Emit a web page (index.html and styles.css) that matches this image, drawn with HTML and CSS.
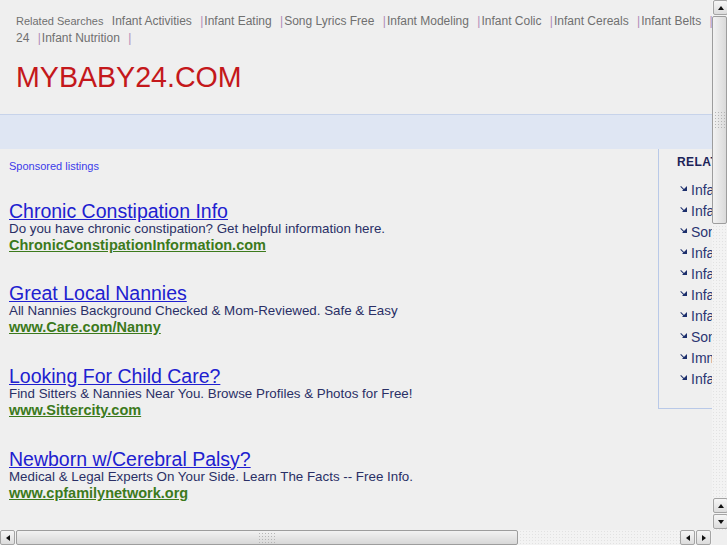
FILE: index.html
```html
<!DOCTYPE html>
<html lang="en">
<head>
  <meta charset="UTF-8" />
  <title>mybaby24.com</title>
  <link rel="stylesheet" href="styles.css">
</head>
<body>
  <div class="window">
    <div class="viewport">
      <div class="page">
        <div class="top">
          <div class="related">
            <span class="related-label">Related Searches</span>
            <a href="#">Infant Activities</a> <span class="sep">|</span><a href="#">Infant Eating</a> <span class="sep">|</span><a href="#">Song Lyrics Free</a> <span class="sep">|</span><a href="#">Infant Modeling</a> <span class="sep">|</span><a href="#">Infant Colic</a> <span class="sep">|</span><a href="#">Infant Cereals</a> <span class="sep">|</span><a href="#">Infant Belts</a> <span class="sep">|</span><a href="#">Stroller 24</a> <span class="sep">|</span><a href="#">Infant Nutrition</a> <span class="sep">|</span>
          </div>
          <h1 class="domain">MYBABY24.COM</h1>
        </div>
        <div class="band"></div>
        <div class="content">
          <div class="listings">
            <div class="sponsored">Sponsored listings</div>

            <div class="ad">
              <a class="ad-title" href="#">Chronic Constipation Info</a>
              <div class="ad-text">Do you have chronic constipation? Get helpful information here.</div>
              <a class="ad-url" href="#">ChronicConstipationInformation.com</a>
            </div>

            <div class="ad">
              <a class="ad-title" href="#">Great Local Nannies</a>
              <div class="ad-text">All Nannies Background Checked &amp; Mom-Reviewed. Safe &amp; Easy</div>
              <a class="ad-url" href="#">www.Care.com/Nanny</a>
            </div>

            <div class="ad">
              <a class="ad-title" href="#">Looking For Child Care?</a>
              <div class="ad-text">Find Sitters &amp; Nannies Near You. Browse Profiles &amp; Photos for Free!</div>
              <a class="ad-url" href="#">www.Sittercity.com</a>
            </div>

            <div class="ad">
              <a class="ad-title" href="#">Newborn w/Cerebral Palsy?</a>
              <div class="ad-text">Medical &amp; Legal Experts On Your Side. Learn The Facts -- Free Info.</div>
              <a class="ad-url" href="#">www.cpfamilynetwork.org</a>
            </div>
          </div>

          <div class="sidebar">
            <div class="side-head">RELATED SEARCHES</div>
            <ul class="side-list">
              <li><a href="#">Infant Activities</a></li>
              <li><a href="#">Infant Eating</a></li>
              <li><a href="#">Song Lyrics Free</a></li>
              <li><a href="#">Infant Modeling</a></li>
              <li><a href="#">Infant Colic</a></li>
              <li><a href="#">Infant Cereals</a></li>
              <li><a href="#">Infant Belts</a></li>
              <li><a href="#">Song Lyrics</a></li>
              <li><a href="#">Immunization</a></li>
              <li><a href="#">Infant Nutrition</a></li>
            </ul>
          </div>
        </div>
      </div>
    </div>

    <div class="vscroll">
      <div class="sb-btn"><span class="tri up"></span></div>
      <div class="sb-thumb v"><span class="grip"></span></div>
      <div class="sb-track"></div>
      <div class="sb-btn"><span class="tri up"></span></div>
      <div class="sb-btn"><span class="tri down"></span></div>
    </div>

    <div class="hscroll">
      <div class="sb-btn h"><span class="tri left"></span></div>
      <div class="sb-thumb h"><span class="grip"></span></div>
      <div class="sb-track"></div>
      <div class="sb-btn h"><span class="tri left"></span></div>
      <div class="sb-btn h"><span class="tri right"></span></div>
    </div>

    <div class="corner"></div>
  </div>
</body>
</html>
```

FILE: styles.css
```css
html, body {
  margin: 0;
  padding: 0;
  background: #efefef;
  font-family: "Liberation Sans", Arial, sans-serif;
}

a {
  text-decoration: none;
}

.window {
  display: grid;
  grid-template-columns: 712px 15px;
  grid-template-rows: 530px 15px;
  width: 727px;
  height: 545px;
  overflow: hidden;
}

.viewport {
  overflow: hidden;
}

.page {
  width: 950px;
}

/* top strip */
.top {
  width: 744px;
  padding: 13px 0 0 16px;
  height: 101px;
}

.related {
  font-size: 12px;
  line-height: 17px;
  color: #707070;
}

.related-label {
  font-size: 11px;
  margin-right: 5px;
}

.related a {
  color: #707070;
  margin-right: 5px;
}

.sep {
  color: #b08cb8;
  margin-right: 1px;
}

.domain {
  margin: 13px 0 0;
  font-size: 28.6px;
  font-weight: normal;
  line-height: 34px;
  color: #c4181b;
}

.band {
  height: 34px;
  border-top: 1px solid #c7d3ea;
  background: #dfe6f3;
}

/* listings + sidebar */
.content {
  display: flex;
  align-items: flex-start;
}

.listings {
  width: 649px;
  padding-left: 9px;
}

.sponsored {
  margin-top: 10px;
  font-size: 11px;
  line-height: 14px;
  color: #3b3bea;
}

.ad {
  margin-top: 32px;
  line-height: 17px;
}

.sponsored + .ad {
  margin-top: 30px;
}

.sponsored + .ad + .ad {
  margin-top: 31px;
}

.ad-title {
  display: block;
  font-size: 19.5px;
  line-height: 17px;
  color: #2020d0;
  text-decoration: underline;
}

.ad-text {
  font-size: 13.35px;
  color: #2a2f66;
}

.ad-url {
  display: block;
  font-size: 14.5px;
  font-weight: bold;
  color: #3c7a1c;
  text-decoration: underline;
}

.sidebar {
  width: 240px;
  border-left: 1px solid #b9c9e8;
  border-bottom: 1px solid #b9c9e8;
  padding: 6px 0 11px 18px;
  height: 242px;
}

.side-head {
  font-size: 12px;
  font-weight: bold;
  color: #1c2358;
  line-height: 14px;
  letter-spacing: 0.4px;
}

.side-list {
  list-style: none;
  margin: 11px 0 0;
  padding: 0;
}

.side-list li {
  position: relative;
  padding-left: 14px;
  font-size: 14px;
  line-height: 21px;
}

/* small down-right arrow */
.side-list li::before {
  content: "";
  position: absolute;
  left: 5px;
  top: 6px;
  width: 0;
  height: 0;
  border-top: 5px solid transparent;
  border-right: 5px solid #1c2f6c;
}

.side-list li::after {
  content: "";
  position: absolute;
  left: 4px;
  top: 6px;
  width: 5px;
  height: 1.4px;
  background: #1c2f6c;
  transform: rotate(45deg);
  transform-origin: 0 0;
}

.side-list a {
  color: #2a3572;
}

/* scrollbars */
.vscroll, .hscroll {
  display: flex;
  background-color: #f3f3f3;
  background-image: radial-gradient(#e2e2e2 0.6px, transparent 0.8px);
  background-size: 3px 3px;
}

.vscroll {
  flex-direction: column;
}

.sb-btn {
  flex: none;
  width: 13px;
  height: 13px;
  margin: 0 1px 1px 1px;
  border: 1px solid #a4a4a4;
  border-radius: 2px;
  background: linear-gradient(#f6f6f6, #dcdcdc);
  display: flex;
  align-items: center;
  justify-content: center;
}

.sb-btn.h {
  margin: 0 1px 0 0;
}

.sb-thumb {
  flex: none;
  display: flex;
  align-items: center;
  justify-content: center;
  border: 1px solid #9d9d9d;
  border-radius: 2px;
}

.sb-thumb.v {
  width: 13px;
  height: 206px;
  background: linear-gradient(90deg, #f2f2f2, #dadada);
}

.sb-thumb.h {
  height: 13px;
  width: 500px;
  background: linear-gradient(#f2f2f2, #d8d8d8);
}

.grip {
  background-image: radial-gradient(#b5b5b5 0.7px, transparent 0.9px);
  background-size: 3px 3px;
}

.sb-thumb.v .grip {
  width: 12px;
  height: 18px;
}

.sb-thumb.h .grip {
  width: 18px;
  height: 11px;
}

.sb-track {
  flex: 1;
}

.tri {
  width: 0;
  height: 0;
}

.tri.up {
  border-left: 3px solid transparent;
  border-right: 3px solid transparent;
  border-bottom: 4px solid #111;
}

.tri.down {
  border-left: 3px solid transparent;
  border-right: 3px solid transparent;
  border-top: 4px solid #111;
}

.tri.left {
  border-top: 3px solid transparent;
  border-bottom: 3px solid transparent;
  border-right: 4px solid #111;
}

.tri.right {
  border-top: 3px solid transparent;
  border-bottom: 3px solid transparent;
  border-left: 4px solid #111;
}

.corner {
  background: #efefef;
}
```
